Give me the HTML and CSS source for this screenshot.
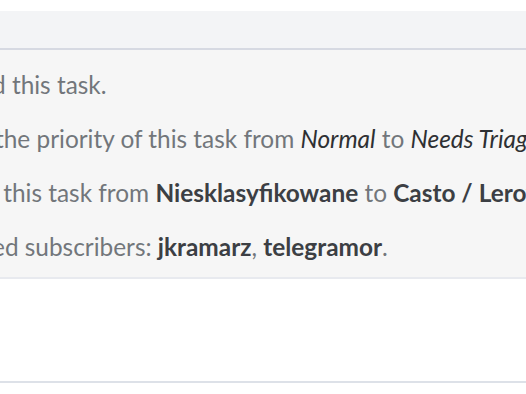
FILE: index.html
```
<!DOCTYPE html>
<html lang="en">

<head>
  <meta charset="UTF-8" />
  <meta name="viewport" content="width=device-width, initial-scale=1.0" />
  <title>Task history</title>
  <link rel="stylesheet" href="styles.css">
</head>

<body>
  <!-- 顶部的标题栏 -->
  <div class="bar"></div>

  <!-- 任务的变更记录 -->
  <ul class="story">
    <li class="line cut-d">d this task.</li>
    <li class="line cut-t">the priority of this task from <em>Normal</em> to <em>Needs Triage</em>.</li>
    <li class="line cut-sp">&nbsp;this task from <b>Niesklasyfikowane</b> to <b>Casto / Leroy Merlin</b>.</li>
    <li class="line cut-e">ed subscribers: <b>jkramarz</b>, <b>telegramor</b>.</li>
  </ul>

  <!-- 下面的空白区域 -->
  <div class="blank"></div>
</body>

</html>
```

FILE: styles.css
```
* {
  margin: 0;
  padding: 0;
}

ul {
  list-style: none;
}

body {
  background: #fff;
  font-family: Lato, "Noto Sans", sans-serif;
  overflow: hidden;
}

.bar {
  margin-top: 11px;
  height: 37px;
  background: #f3f4f6;
  border-bottom: 2px solid #d6d9e2;
}

.story {
  background: #f6f6f6;
  border-bottom: 2px solid #e8eaef;
  padding: 8px 0 3px;
  overflow: hidden;
}

.story .line {
  font-size: 24.4px;
  line-height: 54px;
  color: #72767b;
  white-space: nowrap;
}

.story b {
  color: #3c3f44;
}

.story em {
  color: #2e3033;
}

/* 左边被截掉的部分 */
.story .cut-d {
  margin-left: -8px;
}

.story .cut-t {
  margin-left: -5px;
}

.story .cut-sp {
  margin-left: -3px;
}

.story .cut-e {
  margin-left: -8px;
}

.blank {
  height: 102px;
  border-bottom: 2px solid #dde1e8;
}
```
